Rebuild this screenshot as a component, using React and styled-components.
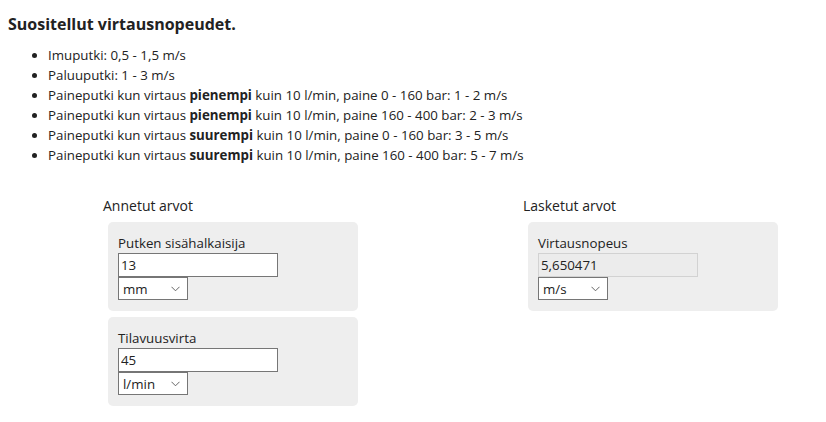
import styled, { createGlobalStyle } from "styled-components";

const GlobalStyle = createGlobalStyle`
    body{
        margin: 0;
        background: #ffffff;
        font-family: "Open Sans", "Noto Sans", sans-serif;
        color: #222222;
    }
`;

const recommendations = [
    { text: "Imuputki: 0,5 - 1,5 m/s" },
    { text: "Paluuputki: 1 - 3 m/s" },
    { pre: "Paineputki kun virtaus ", bold: "pienempi", post: " kuin 10 l/min, paine 0 - 160 bar: 1 - 2 m/s" },
    { pre: "Paineputki kun virtaus ", bold: "pienempi", post: " kuin 10 l/min, paine 160 - 400 bar: 2 - 3 m/s" },
    { pre: "Paineputki kun virtaus ", bold: "suurempi", post: " kuin 10 l/min, paine 0 - 160 bar: 3 - 5 m/s" },
    { pre: "Paineputki kun virtaus ", bold: "suurempi", post: " kuin 10 l/min, paine 160 - 400 bar: 5 - 7 m/s" },
];

function Field({ label, value, unit, units, readOnly }){
    return(
        <Panel>
            <Label>{label}</Label>
            <Input defaultValue={value} readOnly={readOnly} $readOnly={readOnly} />
            <SelectWrap>
                <Select defaultValue={unit}>
                    {units.map(u => <option key={u}>{u}</option>)}
                </Select>
                <Chevron width="9" height="6" viewBox="0 0 9 6">
                    <path d="M0.5 0.8 L4.5 4.8 L8.5 0.8" fill="none" stroke="#555" strokeWidth="0.9" />
                </Chevron>
            </SelectWrap>
        </Panel>
    )
}

export default function App(){
    return(
        <Page>
            <GlobalStyle />
            <Title>Suositellut virtausnopeudet.</Title>
            <List>
                {recommendations.map((r, i) => (
                    <li key={i}>
                        {r.text ? r.text : <>{r.pre}<b>{r.bold}</b>{r.post}</>}
                    </li>
                ))}
            </List>
            <Columns>
                <Column>
                    <ColumnTitle>Annetut arvot</ColumnTitle>
                    <Field label="Putken sisähalkaisija" value="13" unit="mm" units={["mm", "cm", "m"]} />
                    <Field label="Tilavuusvirta" value="45" unit="l/min" units={["l/min", "l/s", "m³/h"]} />
                </Column>
                <Column>
                    <ColumnTitle>Lasketut arvot</ColumnTitle>
                    <Field label="Virtausnopeus" value="5,650471" unit="m/s" units={["m/s", "km/h"]} readOnly />
                </Column>
            </Columns>
        </Page>
    )
}

const Page = styled.div`
    padding: 12px 8px;
    font-size: 13.3px;
`

const Title = styled.h1`
    margin: 0 0 9px 0;
    font-size: 16px;
    font-weight: 700;
    line-height: 24px;
`

const List = styled.ul`
    margin: 0;
    padding-left: 40px;
    line-height: 20px;

    b{
        font-weight: 700;
    }
`

const Columns = styled.div`
    display: flex;
    gap: 165px;
    padding-left: 95px;
    margin-top: 31px;
`

const Column = styled.div`
    display: flex;
    flex-direction: column;
    gap: 6px;
    width: 255px;
`

const ColumnTitle = styled.div`
    font-size: 14px;
    line-height: 20px;
    margin-bottom: 0;
`

const Panel = styled.div`
    display: flex;
    flex-direction: column;
    align-items: flex-start;
    margin-left: 5px;
    padding: 11px 10px 10px 10px;
    height: 89px;
    box-sizing: border-box;
    background: #eeeeee;
    border-radius: 5px;
`

const Label = styled.div`
    font-size: 13.3px;
    line-height: 20px;
`

const Input = styled.input`
    box-sizing: border-box;
    width: 160px;
    height: 24px;
    padding: 0 2px;
    border: 1px solid ${props => props.$readOnly ? "#d2d2d2" : "#767676"};
    background: ${props => props.$readOnly ? "#ececec" : "#ffffff"};
    font-family: inherit;
    font-size: 13.3px;
    color: #222222;
    outline: none;
`

const SelectWrap = styled.div`
    position: relative;
    display: flex;
`

const Select = styled.select`
    appearance: none;
    box-sizing: border-box;
    width: 70px;
    height: 23px;
    padding: 0 20px 0 4px;
    border: 1px solid #767676;
    border-radius: 0;
    background: #ffffff;
    font-family: inherit;
    font-size: 13.3px;
    color: #222222;
`

const Chevron = styled.svg`
    position: absolute;
    right: 8px;
    top: 9px;
    pointer-events: none;
`
